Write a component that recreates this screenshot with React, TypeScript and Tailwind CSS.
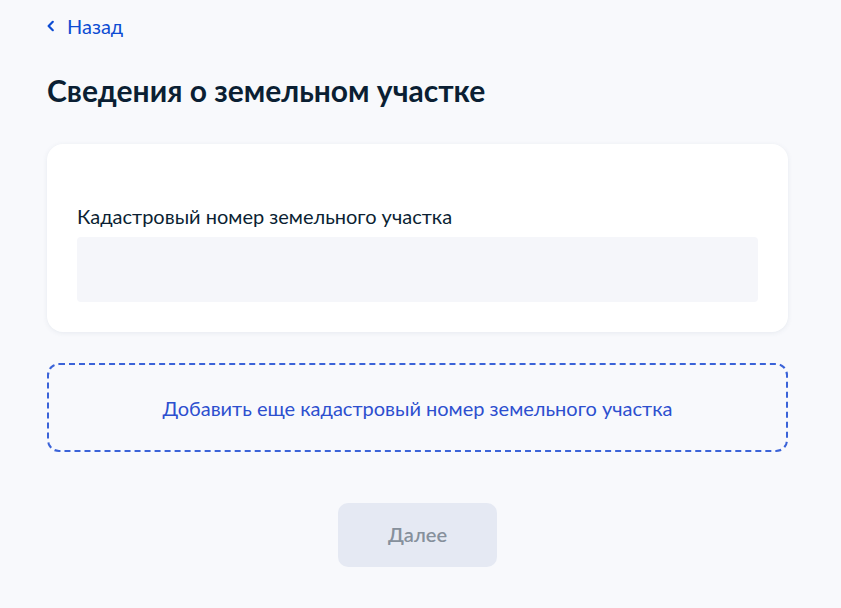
import React from "react";

export default function App() {
  return (
    <div className="min-h-[608px] w-full bg-[#f8f9fc] font-['Lato','Noto_Sans',sans-serif] text-[#0b1f33]">
      <div className="w-[741px] ml-[47px] pt-[14px]">
        <a className="flex items-center h-[24px] gap-[10px] text-[#0d4cd3] text-[20px] leading-[24px] cursor-pointer">
          <svg width="12" height="14" viewBox="0 0 12 14" fill="none" className="ml-[-2px]">
            <path d="M7.8 2.8 L3.6 7 L7.8 11.2" stroke="#0d4cd3" strokeWidth="2.2" strokeLinecap="round" strokeLinejoin="round" />
          </svg>
          <span>Назад</span>
        </a>
        <h1 className="mt-[32px] text-[30px] leading-[40px] font-bold">Сведения о земельном участке</h1>
        <div className="mt-[34px] bg-white rounded-[16px] shadow-[0_1px_4px_rgba(228,232,238,0.9)] px-[30px] pt-[60px] pb-[30px]">
          <div className="text-[20px] leading-[24px] text-[#0b1f33]">Кадастровый номер земельного участка</div>
          <div className="mt-[9px] h-[65px] bg-[#f5f6fa] rounded-[4px]" />
        </div>
        <div className="mt-[31px] h-[89px] rounded-[12px] border-2 border-dashed border-[#3b63d8] flex items-center justify-center text-[20px] leading-[24px] text-[#2d4fcf]">
          Добавить еще кадастровый номер земельного участка
        </div>
        <div className="mt-[51px] flex justify-center">
          <button className="w-[159px] h-[64px] rounded-[10px] bg-[#e5e9f3] text-[#86909c] text-[20px] font-semibold pb-[2px]">
            Далее
          </button>
        </div>
      </div>
    </div>
  );
}
